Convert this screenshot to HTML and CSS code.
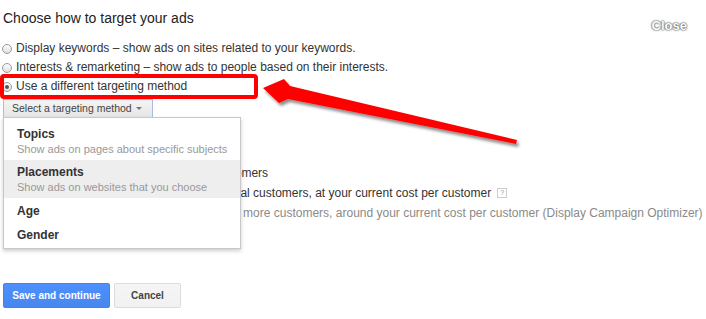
FILE: index.html
```html
<!doctype html>
<html>
<head>
<meta charset="utf-8">
<title>Choose how to target your ads</title>
<link rel="stylesheet" href="styles.css">
</head>
<body>
<div class="page">
    <h1>Choose how to target your ads</h1>
    <a class="close">Close</a>

    <ul class="choices">
        <li><span class="radio"></span>Display keywords – show ads on sites related to your keywords.</li>
        <li><span class="radio"></span>Interests &amp; remarketing – show ads to people based on their interests.</li>
        <li><span class="radio on"></span>Use a different targeting method</li>
    </ul>

    <div class="picker">
        <div class="picker-btn">Select a targeting method <span class="caret"></span></div>
        <div class="menu">
            <div class="item"><b>Topics</b><span>Show ads on pages about specific subjects</span></div>
            <div class="item hover"><b>Placements</b><span>Show ads on websites that you choose</span></div>
            <div class="item short"><b>Age</b></div>
            <div class="item short"><b>Gender</b></div>
        </div>
    </div>

    <div class="auto">
        <ul class="choices sub">
            <li><span class="radio on"></span>Don't automatically target new customers</li>
            <li><span class="radio"></span>Conservative targeting: Get additional customers, at your current cost per customer <span class="help">?</span></li>
            <li class="off"><span class="radio"></span>Aggressive automatic targeting: Get more customers, around your current cost per customer (Display Campaign Optimizer)</li>
        </ul>
    </div>

    <div class="actions">
        <button class="btn primary">Save and continue</button>
        <button class="btn">Cancel</button>
    </div>

    <!-- annotation drawn over the screenshot -->
    <div class="callout"></div>
    <svg class="arrow" width="706" height="319" viewBox="0 0 706 319">
        <defs>
            <filter id="shade" x="-10%" y="-30%" width="130%" height="180%">
                <feDropShadow dx="2" dy="3" stdDeviation="1.6" flood-color="#000" flood-opacity="0.45"/>
            </filter>
        </defs>
        <polygon points="263,88 284,79 290,86 517,140 516,144 288,99 279,103" fill="#ff0000" filter="url(#shade)"/>
    </svg>
</div>
</body>
</html>
```

FILE: styles.css
```css
*{
    margin: 0;
    padding: 0;
    box-sizing: border-box;
}
body{
    background: #fff;
    font-family: "Liberation Sans", Arial, sans-serif;
    font-size: 12px;
    color: #333;
    overflow: hidden;
}
.page{
    position: relative;
    width: 706px;
    height: 319px;
    padding: 9px 0 0 3px;
}
h1{
    font-size: 14px;
    line-height: 18px;
    font-weight: normal;
    color: #222;
}
.close{
    position: absolute;
    top: 18px;
    right: 19px;
    font-size: 13px;
    line-height: 16px;
    font-weight: bold;
    color: #fff;
    text-shadow: 0 0 1px #555, 0 0 2px #666, 0 0 2px #888;
}
.choices{
    list-style: none;
    margin: 12px 0 0;
}
.choices li{
    display: flex;
    align-items: center;
    line-height: 19px;
    white-space: nowrap;
}
.radio{
    display: inline-block;
    width: 10px;
    height: 10px;
    margin: 0 4px 0 -1px;
    border: 1px solid #9a9a9a;
    border-radius: 50%;
    background: linear-gradient(#fdfdfd, #dedede);
    position: relative;
    flex: none;
}
.radio.on:after{
    content: '';
    position: absolute;
    left: 2px;
    top: 2px;
    width: 4px;
    height: 4px;
    border-radius: 50%;
    background: #555;
}
.picker{
    position: relative;
    margin: 3px 0 0;
    width: 150px;
}
.picker-btn{
    display: flex;
    align-items: center;
    height: 19px;
    padding: 0 10px 0 8px;
    font-size: 10.5px;
    line-height: 17px;
    color: #444;
    border: 1px solid #a9bde2;
    background: linear-gradient(#f4f4f4, #e6e6e6);
}
.caret{
    margin-left: auto;
    width: 0;
    height: 0;
    border-left: 3px solid transparent;
    border-right: 3px solid transparent;
    border-top: 3px solid #777;
}
.menu{
    position: absolute;
    left: 0;
    top: 18px;
    width: 238px;
    padding: 4px 0 2px;
    background: #fff;
    border: 1px solid #c8c8c8;
    box-shadow: 0 2px 4px rgba(0,0,0,0.2);
    z-index: 2;
}
.item{
    padding: 4px 13px 3px;
    white-space: nowrap;
}
.item.short{
    padding: 5px 13px 3px;
}
.item b{
    display: block;
    line-height: 16px;
    color: #333;
}
.item span{
    display: block;
    font-size: 11px;
    line-height: 15px;
    color: #999;
}
.item.hover{
    background: #eee;
}
.auto{
    margin: 45px 0 0;
}
.choices.sub{
    margin: 0;
    padding-left: 33px;
}
.choices.sub li{
    line-height: 20px;
}
.choices.sub li.off{
    color: #8a8a8a;
}
.help{
    display: inline-block;
    width: 10px;
    height: 10px;
    margin-left: 6px;
    border: 1px solid #ccc;
    font-size: 7px;
    line-height: 8px;
    text-align: center;
    color: #999;
}
.actions{
    display: flex;
    gap: 4px;
    margin: 60px 0 0;
}
.btn{
    height: 25px;
    font-family: "Liberation Sans", Arial, sans-serif;
    font-size: 10px;
    font-weight: bold;
    border-radius: 2px;
    cursor: pointer;
}
.btn.primary{
    width: 107px;
    color: #fff;
    background: linear-gradient(#4d90fe, #4787ed);
    border: 1px solid #3f83ee;
}
.btn{
    width: 67px;
    color: #444;
    background: linear-gradient(#f5f5f5, #f1f1f1);
    border: 1px solid #dcdcdc;
}
.callout{
    position: absolute;
    left: 0;
    top: 74px;
    width: 258px;
    height: 25px;
    border: 4px solid #ff0000;
    border-radius: 4px;
    z-index: 3;
}
.arrow{
    position: absolute;
    left: 0;
    top: 0;
    pointer-events: none;
    z-index: 3;
}
```
